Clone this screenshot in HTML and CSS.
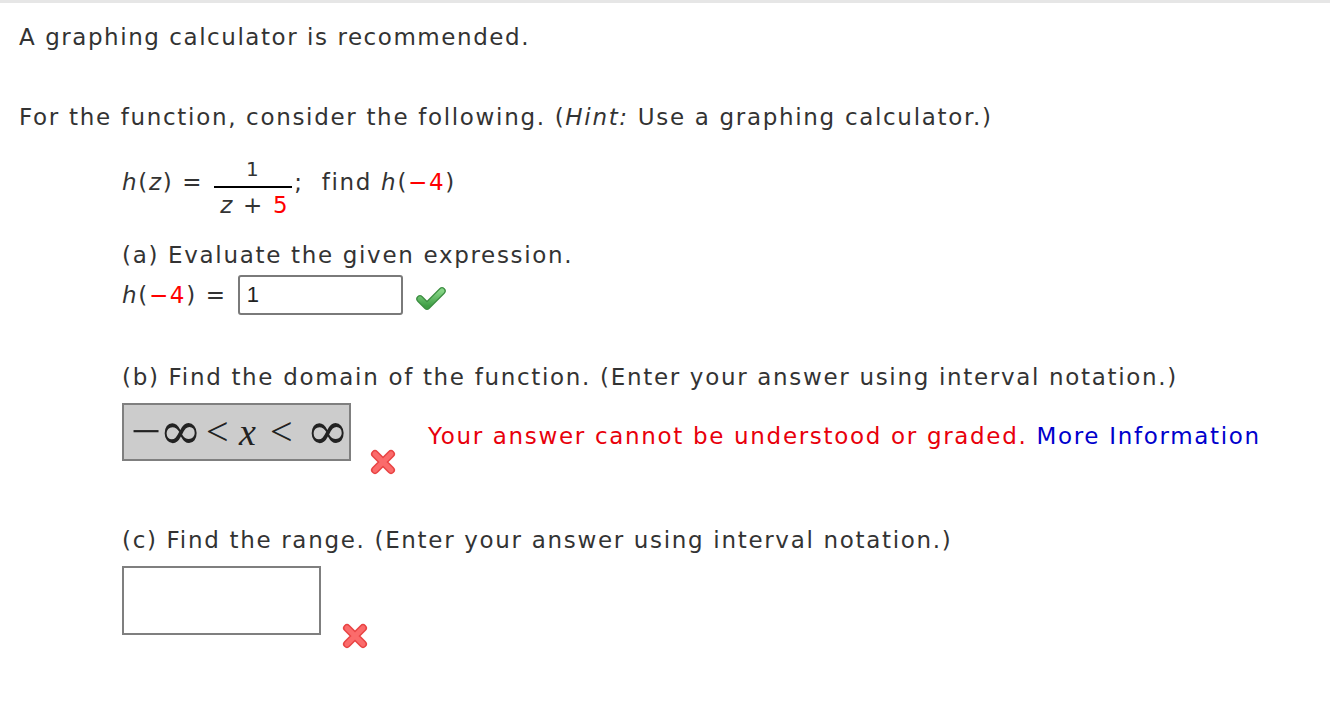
FILE: index.html
```html
<!DOCTYPE html>
<html>
<head>
<meta charset="utf-8">
<link rel="stylesheet" href="styles.css">
</head>
<body>
<div class="page">
  <p class="line first">A graphing calculator is recommended.</p>
  <p class="line second">For the function, consider the following. (<i>Hint:</i> Use a graphing calculator.)</p>
  <div class="indent">
    <div class="math-row">
      <span class="txt"><i>h</i>(<i>z</i>) =&nbsp;</span>
      <span class="frac">
        <span class="num">1</span>
        <span class="den"><i>z</i> + <span class="red">5</span></span>
      </span>
      <span class="txt">;&nbsp; find <i>h</i>(<span class="red">−4</span>)</span>
    </div>
    <p class="line part-a">(a) Evaluate the given expression.</p>
    <div class="answer-row">
      <span class="txt"><i>h</i>(<span class="red">−4</span>) =&nbsp;</span>
      <div class="input-a">1</div>
      <svg class="check" width="32" height="26" viewBox="0 0 32 26">
        <defs>
          <linearGradient id="g" x1="0" y1="0" x2="0" y2="1">
            <stop offset="0" stop-color="#86d586"/>
            <stop offset="1" stop-color="#3f9e45"/>
          </linearGradient>
        </defs>
        <path d="M5 14 L12 21 L27 6" fill="none" stroke="#3d8e42" stroke-width="7.5" stroke-linecap="round" stroke-linejoin="round"/>
        <path d="M5 14 L12 21 L27 6" fill="none" stroke="url(#g)" stroke-width="5" stroke-linecap="round" stroke-linejoin="round"/>
      </svg>
    </div>
    <p class="line part-b">(b) Find the domain of the function. (Enter your answer using interval notation.)</p>
    <div class="answer-b">
      <div class="mathbox"><span class="op">−</span><span class="inf">∞</span><span class="rel r1">&lt;</span><i class="var">x</i><span class="rel r2">&lt;</span><span class="inf">∞</span></div>
      <svg class="cross cross-b" width="28" height="28" viewBox="0 0 28 28">
        <path d="M6 6 L22 22 M22 6 L6 22" fill="none" stroke="#e84444" stroke-width="8" stroke-linecap="round"/>
        <path d="M6 6 L22 22 M22 6 L6 22" fill="none" stroke="#fb6b6b" stroke-width="5" stroke-linecap="round"/>
      </svg>
      <p class="msg">Your answer cannot be understood or graded. <span class="more">More Information</span></p>
    </div>
    <p class="line part-c">(c) Find the range. (Enter your answer using interval notation.)</p>
    <div class="answer-c">
      <div class="emptybox"></div>
      <svg class="cross cross-c" width="28" height="28" viewBox="0 0 28 28">
        <path d="M6 6 L22 22 M22 6 L6 22" fill="none" stroke="#e84444" stroke-width="8" stroke-linecap="round"/>
        <path d="M6 6 L22 22 M22 6 L6 22" fill="none" stroke="#fb6b6b" stroke-width="5" stroke-linecap="round"/>
      </svg>
    </div>
  </div>
</div>
</body>
</html>
```

FILE: styles.css
```css
html, body {
  margin: 0;
  padding: 0;
  background: #fff;
}
body {
  border-top: 3px solid #e6e6e6;
  font-family: "DejaVu Sans", Verdana, sans-serif;
  font-size: 23px;
  letter-spacing: 1.68px;
  color: #333;
}
.page {
  padding-left: 19px;
}
.line {
  margin: 0;
  line-height: 30px;
  white-space: nowrap;
}
.first { margin-top: 19px; letter-spacing: 1.55px; }
.second { margin-top: 50px; }
.indent { padding-left: 103px; }
.red { color: #ff0000; }
.txt { line-height: 30px; white-space: nowrap; }

.math-row {
  display: flex;
  align-items: center;
  margin-top: 10px;
}
.frac {
  display: inline-flex;
  flex-direction: column;
  align-items: center;
  margin-top: 10px;
  padding: 0 2px;
}
.num {
  font-size: 20px;
  line-height: 34px;
  padding: 0 4px;
}
.den {
  line-height: 34px;
  border-top: 2px solid #000;
  padding: 0 3px 0 6px;
}

.part-a { margin-top: 18px; }
.answer-row {
  display: flex;
  align-items: center;
  margin-top: 5px;
}
.input-a {
  width: 154px;
  height: 36px;
  margin-left: 2px;
  border: 2px solid #7a7a7a;
  border-radius: 3px;
  font-family: "Liberation Sans", Arial, sans-serif;
  font-size: 22px;
  letter-spacing: 0;
  line-height: 36px;
  padding-left: 7px;
  color: #222;
}
.check { margin-left: 12px; margin-top: 6px; }

.part-b { margin-top: 47px; }
.answer-b {
  display: flex;
  align-items: flex-start;
  margin-top: 11px;
}
.mathbox {
  box-sizing: border-box;
  width: 229px;
  height: 58px;
  background: #cccccc;
  border: 2px solid #7f7f7f;
  display: flex;
  align-items: center;
  padding-left: 7px;
  font-family: "Liberation Serif", serif;
  font-size: 36px;
  letter-spacing: 0;
  color: #222;
  line-height: 40px;
}
.mathbox .op {
  display: inline-block;
  width: 25px;
  margin-right: 3px;
  font-size: 44px;
  transform: scaleX(1.22);
  transform-origin: 0 50%;
}
.mathbox .inf {
  display: inline-block;
  width: 35px;
  font-family: "DejaVu Serif", serif;
  font-weight: normal;
  font-size: 40px;
  transform: scale(1.3, 1.32);
  transform-origin: 0 58%;
}
.mathbox .r1 { margin-left: 12px; }
.mathbox .rel { width: 18px; font-size: 40px; }
.mathbox .var { margin-left: 15px; width: 17px; font-size: 38px; }
.mathbox .r2 { margin-left: 14px; margin-right: 18px; }
.cross-b { margin-left: 18px; margin-top: 45px; }
.msg {
  margin: 18px 0 0 31px;
  line-height: 30px;
  color: #e8000b;
  white-space: nowrap;
}
.more { color: #0000cc; }

.part-c { margin-top: 49px; }
.answer-c {
  display: flex;
  align-items: flex-start;
  margin-top: 11px;
}
.emptybox {
  box-sizing: border-box;
  width: 199px;
  height: 69px;
  border: 2px solid #7f7f7f;
  background: #fff;
}
.cross-c { margin-left: 20px; margin-top: 56px; }
```
